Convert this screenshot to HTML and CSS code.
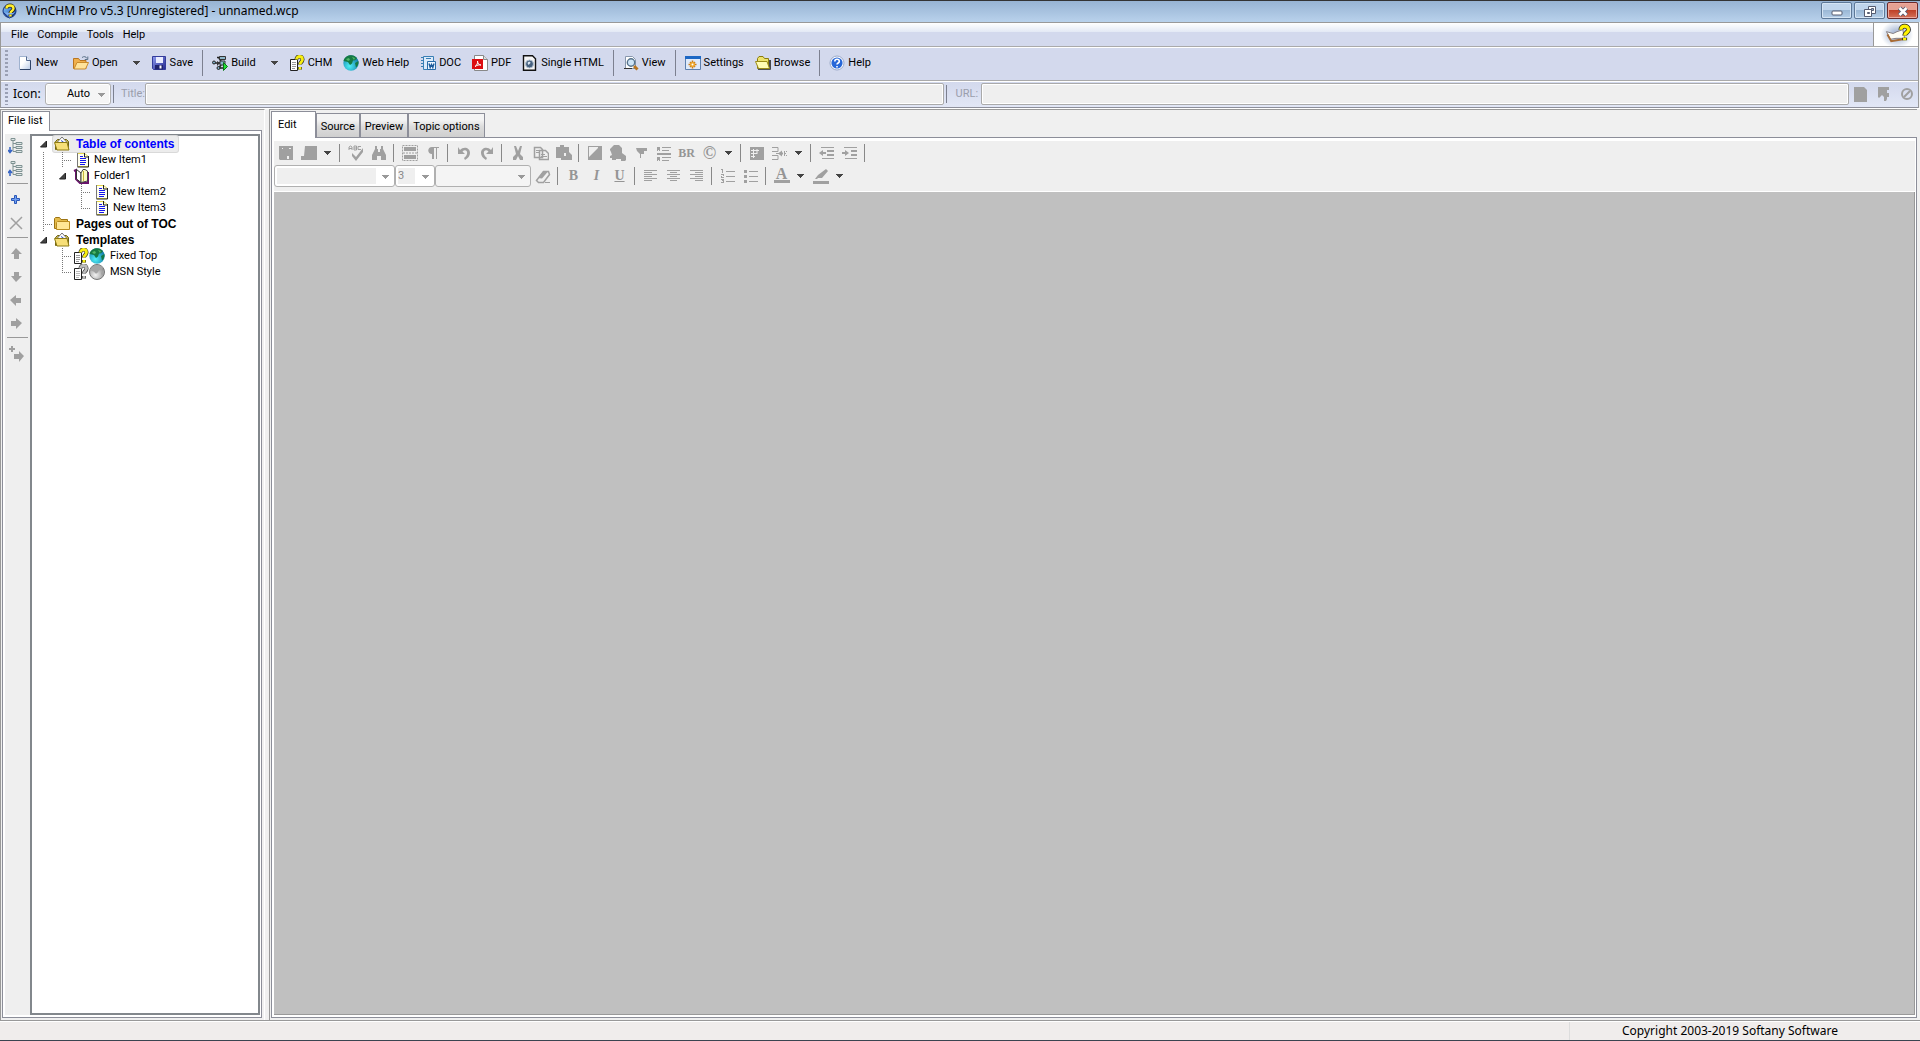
FILE: index.html
```html
<!DOCTYPE html>
<html lang="en">
<head>
<meta charset="utf-8">
<title>WinCHM Pro v5.3 [Unregistered] - unnamed.wcp</title>
<link rel="stylesheet" href="styles.css">
</head>
<body>
<svg class="sprite" aria-hidden="true">
  <defs>
    <linearGradient id="gBlue" x1="0" y1="0" x2="1" y2="1"><stop offset="0" stop-color="#8fd0ff"/><stop offset="1" stop-color="#0b3fa8"/></linearGradient>
    <linearGradient id="gSave" x1="0" y1="0" x2="1" y2="1"><stop offset="0" stop-color="#8e9cf0"/><stop offset="1" stop-color="#23278f"/></linearGradient>
    <linearGradient id="gPage" x1="0" y1="0" x2="1" y2="1"><stop offset=".4" stop-color="#fff"/><stop offset="1" stop-color="#b9cbe8"/></linearGradient>
    <radialGradient id="gGlobe" cx=".4" cy=".7" r=".7"><stop offset="0" stop-color="#4df0f5"/><stop offset="1" stop-color="#1277a8"/></radialGradient>
    <radialGradient id="gGray" cx=".4" cy=".7" r=".7"><stop offset="0" stop-color="#f2f2f2"/><stop offset="1" stop-color="#888"/></radialGradient>
    <radialGradient id="gHalo"><stop offset="0" stop-color="#8ea4c8"/><stop offset="1" stop-color="#fff"/></radialGradient>
  </defs>
  <symbol id="app" viewBox="0 0 16 16"><circle cx="7.500" cy="8" r="6.500" fill="url(#gBlue)" stroke="#12307c"/><path d="M1.500 9.500l6 5.500 6-5.500" fill="#7fb0f0" stroke="#12307c"/><path d="M4.500 5.500c0-4 7-4 7 0 0 2.500-3 2.500-3 4.500M8.500 11.500v2" fill="none" stroke="#222" stroke-width="4"/><path d="M4.500 5.500c0-4 7-4 7 0 0 2.500-3 2.500-3 4.500M8.500 11.500v2" fill="none" stroke="#ffee2e" stroke-width="2.400"/></symbol>
  <symbol id="new" viewBox="0 0 16 16"><path d="M2.500 1.500h7l4 4v9h-11z" fill="url(#gPage)" stroke="#9fb2cf"/><path d="M13.500 5v9.500H3" fill="none" stroke="#2f4468"/><path d="M9.500 1.500v4h4" fill="#dfe9f8" stroke="#54698f"/></symbol>
  <symbol id="open" viewBox="0 0 16 16"><path d="M.5 13.500v-10h5l1.500 2h6v8z" fill="#f0b04c" stroke="#b97520"/><path d="M1 14l3-6.500h11.500L12.500 14z" fill="#ffe39a" stroke="#c98b2c"/><path d="M9 2.500c2-1.500 4-1 5 1M14.800 1.500v3h-3" fill="none" stroke="#5b7189"/></symbol>
  <symbol id="save" viewBox="0 0 16 16"><path d="M1.500 1.500h13v13h-12l-1-1z" fill="url(#gSave)" stroke="#343c9b"/><path d="M5 2h7v6H5z" fill="#e9ecff"/><path d="M4 10h8v4.500H4z" fill="#20246e"/><path d="M8.500 10.500h2v3h-2z" fill="#fff"/></symbol>
  <symbol id="build" viewBox="0 0 16 16"><path d="M5 2.500h7M7 3l3 5M1 8h10M7 13l3-5M6 13h5" stroke="#222" stroke-width="1.500" fill="none"/><circle cx="2" cy="7.500" r="1.500" fill="#79a9c4" stroke="#222"/><path d="M7.500 1.500h6v3h-6zM8 6h5v4H8z" fill="#8bb5c8" stroke="#333"/><path d="M5 6l3 2-3 3z" fill="#333"/><circle cx="6.500" cy="13" r="1.500" fill="#79a9c4" stroke="#222"/><path d="M11.500 7.500l4 4-4 4z" fill="#23dd35" stroke="#087414"/></symbol>
  <symbol id="chm" viewBox="0 0 16 16"><path d="M1.500 4.500h7v11h-7z" fill="#fff" stroke="#222"/><path d="M3 7.500h4M3 9.500h4M3 11.500h4M3 13.500h3" stroke="#999"/><path d="M7.500 4.500c0-4 6-4 6 0 0 2.500-2.500 2.500-2.500 5M11 12v2.500" fill="none" stroke="#222" stroke-width="4"/><path d="M7.500 4.500c0-4 6-4 6 0 0 2.500-2.500 2.500-2.500 5M11 12v2.500" fill="none" stroke="#f7ee12" stroke-width="2.800"/></symbol>
  <symbol id="chmGray" viewBox="0 0 16 16"><path d="M1.500 4.500h7v11h-7z" fill="#fff" stroke="#222"/><path d="M3 7.500h4M3 9.500h4M3 11.500h4M3 13.500h3" stroke="#bbb"/><path d="M7.500 4.500c0-4 6-4 6 0 0 2.500-2.500 2.500-2.500 5M11 12v2.500" fill="none" stroke="#333" stroke-width="4"/><path d="M7.500 4.500c0-4 6-4 6 0 0 2.500-2.500 2.500-2.500 5M11 12v2.500" fill="none" stroke="#bbb" stroke-width="2.800"/></symbol>
  <symbol id="globe" viewBox="0 0 16 16"><circle cx="8" cy="8" r="7.700" fill="url(#gGlobe)"/><path d="M.5 6C1.500 2 5 .3 8 .3c3 0 5 1.500 6 3l-2 2-2 .2-1 3-2 1.500-2-3zM12 8l3.500-2c.3 3-.8 5-2.500 6.500z" fill="#157a43"/><path d="M3 4l3-1 1 2-2 1zM9 2l3 1-1 2z" fill="#50b868"/></symbol>
  <symbol id="globeGray" viewBox="0 0 16 16"><circle cx="8" cy="8" r="7.500" fill="url(#gGray)" stroke="#777"/><path d="M1 6C2 3 5 1 8 1c3 0 5 1 6 3l-2 2-2 .2-1 2-2 1.500-2-2zM12 9l3-3c.3 3-.8 5-2 6z" fill="#a4a4a4"/></symbol>
  <symbol id="doc" viewBox="0 0 16 16"><path d="M3.500 1.500h10v13h-10z" fill="#dcebfb" stroke="#397fb4"/><path d="M1 2.500h3M1 5.500h3M1 8.500h3M1 11.500h3M6 3.500h5" stroke="#397fb4"/><path d="M7.500 6.500h8v8h-8z" fill="#eef6ff" stroke="#286ca8"/><path d="M9 8.500l1.200 4 1.300-3 1.300 3 1.200-4" fill="none" stroke="#1d5c9c" stroke-width="1.400"/></symbol>
  <symbol id="pdf" viewBox="0 0 16 16"><path d="M2.500.5h9l4 4v11h-13z" fill="#fff" stroke="#888"/><path d="M11.500.5v4h4" fill="#ddd" stroke="#888"/><path d="M0 4h11v10H0z" fill="#dc0d12"/><path d="M3 11.500c2-1 3-4 2.500-5.500 0 3 2 4 3.500 4-2-.5-4 .2-6 1.500z" fill="none" stroke="#fff"/></symbol>
  <symbol id="html" viewBox="0 0 16 16"><path d="M1.500.8h9l3 3v11.400h-12z" fill="#f5f5f5" stroke="#111" stroke-width="1.400"/><circle cx="7.500" cy="9" r="4" fill="#46617f" stroke="#b7c4d2"/><path d="M5.500 8c1-2 3-1.500 3 0l-2 2z" fill="#dce8f4"/></symbol>
  <symbol id="view" viewBox="0 0 16 16"><path d="M2.500 1.500h7l3 3v9h-10z" fill="#fff" stroke="#8897ad"/><path d="M1 13.500h8" stroke="#333"/><circle cx="8" cy="7.500" r="3.700" fill="#cde4f7" stroke="#56728c" stroke-width="1.400"/><path d="M11 11l3.500 3.500" stroke="#b77420" stroke-width="3"/></symbol>
  <symbol id="settings" viewBox="0 0 16 16"><path d="M.5 1.500h15v13H.5z" fill="#dfeafa" stroke="#5d7fae"/><path d="M0 1h16v3H0z" fill="#1c67c4"/><path d="M7.500 5.500v8M3.500 9.500h8M5 7l5 5M10 7l-5 5" stroke="#cf7d12" stroke-width="1.600"/><circle cx="7.500" cy="9.500" r="2.500" fill="#eda82e"/><circle cx="7.500" cy="9.500" r="1" fill="#fff"/></symbol>
  <symbol id="browse" viewBox="0 0 16 16"><path d="M2.500 13.500V3.500l1.500-2h4l1.500 2h4v10z" fill="#eee36b" stroke="#8a7c0e"/><path d="M15 5v9H3" fill="none" stroke="#222" stroke-width="1.600"/><path d="M.5 6.500h11.500l2.500 7H3.500z" fill="#fffbb4" stroke="#9a8b16"/></symbol>
  <symbol id="help" viewBox="0 0 16 16"><circle cx="8" cy="8" r="7" fill="#fff" stroke="#9aa8c8"/><circle cx="8" cy="8" r="5.600" fill="#2767d8"/><path d="M5.800 6.500c0-3 4.500-3 4.500 0C10.300 8 8 8 8 9.500M8 11v1.500" fill="none" stroke="#fff" stroke-width="1.600"/></symbol>
  <symbol id="logo" viewBox="0 0 42 24"><path d="M0 0h42v24H0z" fill="#fff"/><ellipse cx="21" cy="12" rx="17" ry="14" fill="url(#gHalo)"/><path d="M10 9l4 8 6-1 9 0-2-9-6 2-4 2z" fill="#fffdf5" stroke="#847b80"/><path d="M11 12l4 7 12-2" fill="none" stroke="#a86b35" stroke-width="2"/><path d="M25 7c0-5 8-5 8 0 0 3-4 3-4 6M29 15.500v2.500" fill="none" stroke="#222" stroke-width="5"/><path d="M25 7c0-5 8-5 8 0 0 3-4 3-4 6M29 15.500v2.500" fill="none" stroke="#fff200" stroke-width="3.400"/></symbol>
  <symbol id="down" viewBox="0 0 8 8"><path d="M0 2h7v1H0zM1 3h5v1H1zM2 4h3v1H2zM3 5h1v1H3z" fill="currentColor"/></symbol>

  <symbol id="folderOpen" viewBox="0 0 16 16"><path d="M1.500 5.500l2-2h9l2 2v8h-13z" fill="#c9b64c" stroke="#6f6312"/><path d="M3 6.500l5-5.500 5 5.500v2H3z" fill="#fff" stroke="#777"/><path d="M7 4.500l2.500 1.500" stroke="#3355cc"/><path d="M.5 6.500h12.500l2 7.500H3z" fill="#f7df78" stroke="#8f7c14"/></symbol>
  <symbol id="folder" viewBox="0 0 16 16"><path d="M.5 12.500v-10l1-1h4l1.500 2h6.500v9z" fill="#e5bb4a" stroke="#9c7414"/><path d="M2.500 13.500v-7l1-1H15.500v8z" fill="#ffe696" stroke="#b98b20"/></symbol>
  <symbol id="page" viewBox="0 0 16 16"><path d="M4.500 1.500h7l4 3v10h-11z" fill="#fffff0" stroke="#e4d64a"/><path d="M15.500 4v11H4.500M11.500 1v4h4" fill="none" stroke="#222"/><path d="M4.500 1v14" stroke="#777"/><path d="M7 4.500h3M7 6.500h6M7 8.500h6M7 10.500h6M7 12.500h5" stroke="#1515ee"/></symbol>
  <symbol id="book" viewBox="0 0 16 16"><path d="M1 3l2-1v9l4 4h8V4" fill="none" stroke="#6a136c" stroke-width="2"/><path d="M3.500 1.500L8 5v9.500L3.500 11z" fill="#fff" stroke="#333"/><path d="M8 5l2-3.500h2L14.500 3v10L8 14.500z" fill="#fdfac4" stroke="#444"/><path d="M10.500 3v10" stroke="#c8b93a"/></symbol>
  <symbol id="expander" viewBox="0 0 8 8"><path d="M6.500 1v6h-6z" fill="#444" stroke="#222"/></symbol>

  <symbol id="treeDown" viewBox="0 0 16 16"><path d="M3 .5h4v2H3zM8 4.500h6v2H8zM8 8.500h6v2H8zM8 12.500h6v2H8z" fill="#dfe7e7" stroke="#7f9292"/><path d="M5 3v10.500h3M5 5.500h3M5 9.500h3" fill="none" stroke="#7f9292"/><path d="M2 9v5M0 12l2 2.500L4 12" fill="none" stroke="#3563c4" stroke-width="1.500"/></symbol>
  <symbol id="treeUp" viewBox="0 0 16 16"><path d="M3 .5h4v2H3zM8 4.500h6v2H8zM8 8.500h6v2H8zM8 12.500h6v2H8z" fill="#dfe7e7" stroke="#7f9292"/><path d="M5 3v10.500h3M5 5.500h3M5 9.500h3" fill="none" stroke="#7f9292"/><path d="M2 15v-5M0 12l2-2.500L4 12" fill="none" stroke="#3563c4" stroke-width="1.500"/></symbol>
  <symbol id="plus" viewBox="0 0 16 16"><path d="M6.500 3.500h2v3h3v2h-3v3h-2v-3h-3v-2h3z" fill="#6f9ef0" stroke="#2a57b8"/></symbol>
  <symbol id="cross" viewBox="0 0 16 16"><path d="M3 3l11 11M14 2L2 14" stroke="#a0a0a0" stroke-width="1.500"/></symbol>
  <symbol id="up" viewBox="0 0 16 16"><path d="M8 2l6 6h-3v5H6V8H3z"/></symbol>
  <symbol id="dn" viewBox="0 0 16 16"><path d="M8 13l6-6h-3V3H6v4H3z"/></symbol>
  <symbol id="lt" viewBox="0 0 16 16"><path d="M2 8l6-5v3h5v5H8v3z"/></symbol>
  <symbol id="rt" viewBox="0 0 16 16"><path d="M14 8L8 3v3H3v5h5v3z"/></symbol>
  <symbol id="addRt" viewBox="0 0 16 16"><path d="M3 0h2v2h2v2H5v2H3V4H1V2h2zM16 10l-5-5v3H6v5h5v3z"/></symbol>

  <symbol id="eSave" viewBox="0 0 16 16"><path fill-rule="evenodd" d="M1 1h14v14H2l-1-1zM4 3v1h1V3zM11 3v1h2V3zM9 11v3h2v-3z"/></symbol>
  <symbol id="eImg" viewBox="0 0 16 16"><path d="M4 1h12v14H0v-4h3z"/></symbol>
  <symbol id="eSpell" viewBox="0 0 16 16"><path d="M4 8l4 4 7-9v4l-7 9-4-5z"/><path d="M1 5V2l1.500-1L4 2v3M1 3.500h3M6 1v4h2.500V1zM6 3h2M13 1.500h-3v3h3" fill="none" stroke="#a0a0a0"/></symbol>
  <symbol id="eFind" viewBox="0 0 16 16"><path d="M4 1h2v3h1v3h2V4h1V1h2v3l3 6v5h-5v-4H6v4H1v-5l3-6z"/></symbol>
  <symbol id="eBreak" viewBox="0 0 16 16"><path d="M2 2h12v4H2zM2 10h12v4H2z"/><path d="M.5.500h15v15H.500zM1 8h14" fill="none" stroke="#a0a0a0" stroke-dasharray="2 1"/></symbol>
  <symbol id="ePara" viewBox="0 0 16 16"><path d="M7 9C2 9 2 2 7 2h7v1h-2v11h-1V3H9v11H7z"/></symbol>
  <symbol id="eUndo" viewBox="0 0 16 16"><path d="M2 2v7h7L6.500 6.500C9 4 12 6 11 9c-.5 2-2 3-3 4l1 2c3-2 5-4 5-7 0-5-6-7-10-3z"/></symbol>
  <symbol id="eRedo" viewBox="0 0 16 16"><path d="M14 2v7H7l2.500-2.500C7 4 4 6 5 9c.5 2 2 3 3 4l-1 2C4 13 2 11 2 8c0-5 6-7 10-3z"/></symbol>
  <symbol id="eCut" viewBox="0 0 16 16"><path d="M4 1h2l2 5 2-5h2l-2 8 3 3v3h-3l-2-4-2 4H3v-3l3-3z"/></symbol>
  <symbol id="eCopy" viewBox="0 0 16 16"><path d="M1.500 2.500h6l2 2v8h-8zM6.500 5.500h6l3 3v6h-9z" fill="#efefef" stroke="#a0a0a0" stroke-width="1.500"/><path d="M3 5.500h3M3 7.500h3M8 9.500h4M8 11.500h6" stroke="#a0a0a0"/></symbol>
  <symbol id="ePaste" viewBox="0 0 16 16"><path fill-rule="evenodd" d="M0 2h4V0h4v2h5v5l3 3v5H5v-2H0zM8 8v3h2V8z"/></symbol>
  <symbol id="ePict" viewBox="0 0 16 16"><path fill-rule="evenodd" d="M1 1h14v14H1zM2 2v10L11 3V2z"/></symbol>
  <symbol id="eShape" viewBox="0 0 16 16"><path d="M3 1l1-1h5l3 3v5l4 3v4l-1 1h-4v-2H6v1H2v-2H0v-2l2-1-1-3-1-2V4z"/></symbol>
  <symbol id="eFlag" viewBox="0 0 16 16"><path d="M3 3h11v3h-3v3H8v4H7V9L4 6z"/></symbol>
  <symbol id="eHr" viewBox="0 0 16 16"><path d="M1 8h14v2H1zM6 2h9v1H6zM6 5h7v1H6zM6 12h9v1H6zM6 15h7v1H6zM1 2h3v4H3V5H2v1H1zM1 12h3v4H3v-1H2v1H1z"/></symbol>
  <symbol id="eTable" viewBox="0 0 16 16"><path d="M1 2h14v13H1z"/><path d="M2 5.500h8M2 8.500h6M2 11.500h4M4.500 4v9M8 4v5" stroke="#efefef"/></symbol>
  <symbol id="eCell" viewBox="0 0 16 16"><path d="M0 2.500h6v4H0M0 14.500h6v-4H0M4 8.500h3" fill="none" stroke="#a0a0a0"/><path d="M6 8.500l4-3v2h1v2h-1v2zM12 6h1v2h1V6h1v1h-1v3h1v1h-1V9h-1v2h-1z"/></symbol>
  <symbol id="eOut" viewBox="0 0 16 16"><path d="M2 2h13v1H2zM8 5h7v2H8zM8 9h7v2H8zM3 13h12v1H3zM0 8l4-3v2h3v2H4v2z"/></symbol>
  <symbol id="eIn" viewBox="0 0 16 16"><path d="M2 2h13v1H2zM9 5h6v2H9zM9 9h6v2H9zM3 13h12v1H3zM7 8L3 5v2H0v2h3v2z"/></symbol>
  <symbol id="eErase" viewBox="0 0 16 16"><path d="M1.500 12.500l7-9h5l1 3-6 8h-5z" fill="none" stroke="#a0a0a0" stroke-width="1.500"/><path d="M3 10l4 .500 6-7h-5z"/><path d="M10 14.500h5" stroke="#a0a0a0"/></symbol>
  <symbol id="aLeft" viewBox="0 0 16 16"><path d="M1 2h13v1H1zM1 4h8v1H1zM1 6h13v1H1zM1 8h8v1H1zM1 10h13v1H1zM1 12h8v1H1z"/></symbol>
  <symbol id="aMid" viewBox="0 0 16 16"><path d="M1 2h13v1H1zM4 4h7v1H4zM1 6h13v1H1zM4 8h7v1H4zM1 10h13v1H1zM4 12h7v1H4z"/></symbol>
  <symbol id="aRight" viewBox="0 0 16 16"><path d="M1 2h13v1H1zM6 4h8v1H6zM1 6h13v1H1zM6 8h8v1H6zM1 10h13v1H1zM6 12h8v1H6z"/></symbol>
  <symbol id="lNum" viewBox="0 0 16 16"><path d="M6 3h9v1H6zM6 8h9v1H6zM6 13h9v1H6zM1 1h2v4H2V2H1zM1 6h3v2H2v1h2v1H1V8h2V7H1zM1 11h3v4H1v-1h2v-1H2v-1H1z"/></symbol>
  <symbol id="lBul" viewBox="0 0 16 16"><path d="M6 3h9v1H6zM6 8h9v1H6zM6 13h9v1H6zM1 2h3v3H1zM1 7h3v3H1zM1 12h3v3H1z"/></symbol>
  <symbol id="ePen" viewBox="0 0 16 16"><path d="M13 1l2 2-6 7H5l-1 1H2l3-4zM0 13h16v3H0z"/></symbol>
  <symbol id="tPage" viewBox="0 0 16 16"><path d="M1 1h10l3 3v12H1z"/></symbol>
  <symbol id="tArrow" viewBox="0 0 16 16"><path d="M2 1h11v3h-2v3h2v4h-2v2l-1 2H8v-4L6 9l-3 3-1-1z"/></symbol>
  <symbol id="tNo" viewBox="0 0 16 16"><circle cx="8" cy="8" r="5" fill="none" stroke="#a0a0a0" stroke-width="2"/><path d="M5 11l6-6" stroke="#a0a0a0" stroke-width="2"/></symbol>
</svg>

<div class="window">
  <header class="titlebar">
    <svg class="icon"><use href="#app"/></svg>
    <h1 class="caption">WinCHM Pro v5.3 [Unregistered] - unnamed.wcp</h1>
    <div class="controls">
      <button class="ctl" aria-label="Minimize"><svg class="icon" viewBox="0 0 16 16"><rect x="3" y="8" width="10" height="4" rx="1" fill="#fff" stroke="#555b70"/></svg></button>
      <button class="ctl" aria-label="Restore"><svg class="icon" viewBox="0 0 16 16"><path d="M6.500 3.500h7v7h-7z" fill="#fff" stroke="#555b70"/><path d="M9.500 5.500h2v2h-2z" fill="#8fb0d0" stroke="#555b70"/><path d="M2.500 6.500h7v7h-7z" fill="#fff" stroke="#555b70"/><path d="M5.500 9.500h2v1h-2z" fill="#8fb0d0" stroke="#555b70"/></svg></button>
      <button class="ctl close" aria-label="Close"><svg class="icon" viewBox="0 0 16 16"><path d="M4.500 5l7 7M11.500 5l-7 7" stroke="#555b70" stroke-width="4.500"/><path d="M4.500 5l7 7M11.500 5l-7 7" stroke="#fff" stroke-width="2.600"/></svg></button>
    </div>
  </header>

  <div class="bars">
    <nav class="menubar">
      <button class="menu">File</button><button class="menu">Compile</button><button class="menu">Tools</button><button class="menu">Help</button>
      <div class="brand"><svg class="logo"><use href="#logo"/></svg></div>
    </nav>

    <div class="toolbar">
      <span class="grip"></span>
      <button class="tool wide"><svg class="icon"><use href="#new"/></svg>New</button>
      <button class="tool split"><svg class="icon"><use href="#open"/></svg>Open<svg class="arrow"><use href="#down"/></svg></button>
      <button class="tool"><svg class="icon"><use href="#save"/></svg>Save</button>
      <span class="sep"></span>
      <button class="tool split"><svg class="icon"><use href="#build"/></svg>Build<svg class="arrow"><use href="#down"/></svg></button>
      <button class="tool"><svg class="icon"><use href="#chm"/></svg>CHM</button>
      <button class="tool"><svg class="icon"><use href="#globe"/></svg>Web Help</button>
      <button class="tool"><svg class="icon"><use href="#doc"/></svg>DOC</button>
      <button class="tool"><svg class="icon"><use href="#pdf"/></svg>PDF</button>
      <button class="tool"><svg class="icon"><use href="#html"/></svg>Single HTML</button>
      <span class="sep"></span>
      <button class="tool"><svg class="icon"><use href="#view"/></svg>View</button>
      <span class="sep"></span>
      <button class="tool"><svg class="icon"><use href="#settings"/></svg>Settings</button>
      <button class="tool"><svg class="icon"><use href="#browse"/></svg>Browse</button>
      <span class="sep"></span>
      <button class="tool"><svg class="icon"><use href="#help"/></svg>Help</button>
    </div>

    <div class="propbar">
      <span class="grip"></span>
      <label class="icon-label" for="icon">Icon:</label>
      <div class="select auto"><select id="icon"><option>Auto</option></select><svg class="arrow"><use href="#down"/></svg></div>
      <span class="bar"></span>
      <label class="dim" for="title">Title:</label>
      <input class="field title" id="title" disabled>
      <span class="bar"></span>
      <label class="dim" for="url">URL:</label>
      <input class="field url" id="url" disabled>
      <div class="tail">
        <button class="btn" aria-label="Page" disabled><svg class="icon"><use href="#tPage"/></svg></button>
        <button class="btn" aria-label="Jump" disabled><svg class="icon"><use href="#tArrow"/></svg></button>
        <button class="btn" aria-label="None" disabled><svg class="icon"><use href="#tNo"/></svg></button>
      </div>
    </div>
  </div>

  <main class="work">
    <section class="files">
      <div class="tabs"><button class="tab active list">File list</button></div>
      <div class="files-body">
        <div class="side">
          <button class="btn" aria-label="Expand all"><svg class="icon"><use href="#treeDown"/></svg></button>
          <button class="btn" aria-label="Collapse all"><svg class="icon"><use href="#treeUp"/></svg></button>
          <span class="hsep"></span>
          <button class="btn" aria-label="Add"><svg class="icon"><use href="#plus"/></svg></button>
          <button class="btn" aria-label="Delete"><svg class="icon"><use href="#cross"/></svg></button>
          <span class="hsep"></span>
          <button class="btn" aria-label="Move up"><svg class="icon"><use href="#up"/></svg></button>
          <button class="btn" aria-label="Move down"><svg class="icon"><use href="#dn"/></svg></button>
          <button class="btn" aria-label="Move left"><svg class="icon"><use href="#lt"/></svg></button>
          <button class="btn" aria-label="Move right"><svg class="icon"><use href="#rt"/></svg></button>
          <span class="hsep"></span>
          <button class="btn" aria-label="Add to contents"><svg class="icon"><use href="#addRt"/></svg></button>
        </div>
        <ul class="tree">
          <li class="row"><i class="cell"><svg class="exp"><use href="#expander"/></svg></i><span class="node root selected"><svg class="icon"><use href="#folderOpen"/></svg>Table of contents</span></li>
          <li class="row"><i class="cell v"></i><i class="cell v h"></i><span class="node"><svg class="icon"><use href="#page"/></svg>New Item1</span></li>
          <li class="row"><i class="cell v"></i><i class="cell"><svg class="exp"><use href="#expander"/></svg></i><span class="node"><svg class="icon"><use href="#book"/></svg>Folder1</span></li>
          <li class="row"><i class="cell v"></i><i class="cell"></i><i class="cell v h"></i><span class="node"><svg class="icon"><use href="#page"/></svg>New Item2</span></li>
          <li class="row"><i class="cell v"></i><i class="cell"></i><i class="cell half h"></i><span class="node"><svg class="icon"><use href="#page"/></svg>New Item3</span></li>
          <li class="row"><i class="cell v h"></i><span class="node root"><svg class="icon"><use href="#folder"/></svg>Pages out of TOC</span></li>
          <li class="row"><i class="cell"><svg class="exp"><use href="#expander"/></svg></i><span class="node root"><svg class="icon"><use href="#folderOpen"/></svg>Templates</span></li>
          <li class="row"><i class="cell"></i><i class="cell v h"></i><span class="node"><span class="pair"><svg class="icon"><use href="#chm"/></svg><svg class="icon"><use href="#globe"/></svg></span>Fixed Top</span></li>
          <li class="row"><i class="cell"></i><i class="cell half h"></i><span class="node"><span class="pair"><svg class="icon"><use href="#chmGray"/></svg><svg class="icon"><use href="#globeGray"/></svg></span>MSN Style</span></li>
        </ul>
      </div>
    </section>

    <section class="editor">
      <div class="tabs"><button class="tab active">Edit</button><button class="tab">Source</button><button class="tab">Preview</button><button class="tab">Topic options</button></div>
      <div class="editor-body">
        <div class="format">
          <div class="line">
            <button class="btn" aria-label="Save" disabled><svg class="icon"><use href="#eSave"/></svg></button>
            <button class="btn" aria-label="Template" disabled><svg class="icon"><use href="#eImg"/></svg></button>
            <button class="drop" aria-label="More"><svg class="arrow"><use href="#down"/></svg></button>
            <span class="vsep"></span>
            <button class="btn" aria-label="Spelling" disabled><svg class="icon"><use href="#eSpell"/></svg></button>
            <button class="btn" aria-label="Find" disabled><svg class="icon"><use href="#eFind"/></svg></button>
            <span class="vsep"></span>
            <button class="btn" aria-label="Page break" disabled><svg class="icon"><use href="#eBreak"/></svg></button>
            <button class="btn" aria-label="Paragraph" disabled><svg class="icon"><use href="#ePara"/></svg></button>
            <span class="vsep"></span>
            <button class="btn" aria-label="Undo" disabled><svg class="icon"><use href="#eUndo"/></svg></button>
            <button class="btn" aria-label="Redo" disabled><svg class="icon"><use href="#eRedo"/></svg></button>
            <span class="vsep"></span>
            <button class="btn" aria-label="Cut" disabled><svg class="icon"><use href="#eCut"/></svg></button>
            <button class="btn" aria-label="Copy" disabled><svg class="icon"><use href="#eCopy"/></svg></button>
            <button class="btn" aria-label="Paste" disabled><svg class="icon"><use href="#ePaste"/></svg></button>
            <span class="vsep"></span>
            <button class="btn" aria-label="Picture" disabled><svg class="icon"><use href="#ePict"/></svg></button>
            <button class="btn" aria-label="Shape" disabled><svg class="icon"><use href="#eShape"/></svg></button>
            <button class="btn" aria-label="Bookmark" disabled><svg class="icon"><use href="#eFlag"/></svg></button>
            <button class="btn" aria-label="Rule" disabled><svg class="icon"><use href="#eHr"/></svg></button>
            <button class="btn glyph small" disabled>BR</button>
            <button class="btn glyph sign" disabled>©</button>
            <button class="drop" aria-label="More symbols"><svg class="arrow"><use href="#down"/></svg></button>
            <span class="vsep"></span>
            <button class="btn" aria-label="Table" disabled><svg class="icon"><use href="#eTable"/></svg></button>
            <button class="btn" aria-label="Cells" disabled><svg class="icon"><use href="#eCell"/></svg></button>
            <button class="drop" aria-label="More cells"><svg class="arrow"><use href="#down"/></svg></button>
            <span class="vsep"></span>
            <button class="btn" aria-label="Outdent" disabled><svg class="icon"><use href="#eOut"/></svg></button>
            <button class="btn" aria-label="Indent" disabled><svg class="icon"><use href="#eIn"/></svg></button>
            <span class="vsep"></span>
          </div>
          <div class="line">
            <div class="select font"><select aria-label="Font" disabled><option></option></select><svg class="arrow"><use href="#down"/></svg></div>
            <div class="select size"><select aria-label="Size" disabled><option>3</option></select><svg class="arrow"><use href="#down"/></svg></div>
            <div class="select style"><select aria-label="Style" disabled><option></option></select><svg class="arrow"><use href="#down"/></svg></div>
            <button class="btn" aria-label="Clear" disabled><svg class="icon"><use href="#eErase"/></svg></button>
            <span class="vsep"></span>
            <button class="btn glyph" disabled>B</button>
            <button class="btn glyph italic" disabled>I</button>
            <button class="btn glyph under" disabled>U</button>
            <span class="vsep"></span>
            <button class="btn" aria-label="Left" disabled><svg class="icon"><use href="#aLeft"/></svg></button>
            <button class="btn" aria-label="Center" disabled><svg class="icon"><use href="#aMid"/></svg></button>
            <button class="btn" aria-label="Right" disabled><svg class="icon"><use href="#aRight"/></svg></button>
            <span class="vsep"></span>
            <button class="btn" aria-label="Numbers" disabled><svg class="icon"><use href="#lNum"/></svg></button>
            <button class="btn" aria-label="Bullets" disabled><svg class="icon"><use href="#lBul"/></svg></button>
            <span class="vsep"></span>
            <button class="btn glyph" disabled><span class="ink">A</span></button>
            <button class="drop" aria-label="Text colour"><svg class="arrow"><use href="#down"/></svg></button>
            <button class="btn" aria-label="Highlight" disabled><svg class="icon"><use href="#ePen"/></svg></button>
            <button class="drop" aria-label="Highlight colour"><svg class="arrow"><use href="#down"/></svg></button>
          </div>
        </div>
        <div class="canvas"></div>
      </div>
    </section>
  </main>

  <footer class="status"><span class="copy">Copyright 2003-2019 Softany Software</span></footer>
</div>
</body>
</html>
```
FILE: styles.css
```css
:root {
  --ui: Roboto, "Liberation Sans", sans-serif;
  --wide: "Noto Sans", sans-serif;
  --edge: #8c8e99;
  --face: #f0f0f0;
  --bar: #d3d9ed;
}
* { box-sizing: border-box; }
body { margin: 0; font: 11px/16px var(--ui); color: #000; background: var(--face); }
button, select, input { font: inherit; color: inherit; margin: 0; padding: 0; border: 0; background: none; border-radius: 0; }
button { display: flex; align-items: center; white-space: nowrap; }
.sprite { position: absolute; width: 0; height: 0; }
.icon { width: 16px; height: 16px; flex: none; display: block; fill: #a0a0a0; }
.arrow { width: 8px; height: 8px; flex: none; display: block; color: #444; }
.window { height: 100vh; display: flex; flex-direction: column; }

.titlebar { height: 22px; flex: none; display: flex; align-items: center; padding: 0 0 2px 2px; gap: 8px; border-top: 1px solid #333; background: linear-gradient(#97b3d3, #b9d2ec); }
.caption { margin: 0; font: 12px/18px var(--wide); flex: 1; }
.controls { display: flex; gap: 2px; align-self: flex-start; padding: 1px 2px 0 0; }
.ctl { width: 31px; height: 17px; justify-content: center; border: 1px solid #5d7898; border-radius: 2px; box-shadow: inset 0 0 0 1px #d4e4f4; background: linear-gradient(#c0d5ec 50%, #9bb8d6 50%, #b5cee8); }
.close { border-color: #6b2a2a; box-shadow: inset 0 0 0 1px #eda99d; background: linear-gradient(#e5a193 45%, #bf4128 50%, #d4735a); }

.bars { flex: none; border: 1px solid #999; border-bottom: 1px solid #8e909c; background: var(--bar); margin-right: 1px; }
.menubar { display: flex; height: 24px; padding-left: 6px; border-bottom: 1px solid #aaa; background: linear-gradient(#fff, #e3e9f5 9px, var(--bar) 9px); }
.menu { padding: 0 5px 0 4px; }
.brand { margin-left: auto; border-left: 1px solid #999; padding-left: 2px; background: #fff; }
.logo { width: 42px; height: 23px; display: block; }
.toolbar { display: flex; align-items: center; height: 34px; padding: 0 0 2px 4px; border-top: 1px solid #fff; border-bottom: 1px solid #aaa; }
.grip { width: 3px; align-self: stretch; margin: 2px 0 0; background: repeating-linear-gradient(#9aa0b4 0 2px, transparent 2px 4px); }
.tool { height: 24px; gap: 3px; padding: 0 5px 0 6px; }
.wide { padding: 0 9px; }
.split { padding-right: 4px; }
.split .arrow { margin-left: 12px; }
.sep { width: 1px; height: 26px; margin: 0 3px 0 4px; background: #7c8090; flex: none; }
.propbar { display: flex; align-items: center; height: 26px; padding: 0 0 2px 4px; border-top: 1px solid #fff; background: linear-gradient(var(--bar), #e2e7f6); }
.icon-label { font: 12px/16px var(--wide); width: 37px; padding-left: 5px; }
.select { position: relative; height: 22px; border: 1px solid #b0b0b0; border-radius: 3px; background: #f4f4f4; flex: none; }
.select select { appearance: none; width: 100%; height: 100%; opacity: 1; }
.select .arrow { position: absolute; right: 4px; top: 7px; color: #999; pointer-events: none; }
.auto { width: 66px; background: #f5f5f5; box-shadow: inset 0 0 0 1px #fff; }
.auto select { padding-left: 21px; }
.bar { width: 1px; height: 18px; margin: 0 0 0 2px; background: #7c8090; }
.dim { color: #9a9eac; width: 31px; text-align: right; flex: none; }
.field { height: 22px; min-width: 0; border: 1px solid #aaa; box-shadow: inset 0 0 0 1px #fff; background: #efefef; border-radius: 2px; }
.title { flex: 798; }
.url { flex: 867; margin-left: 3px; }
.tail { display: flex; }
.btn { width: 23px; height: 23px; flex: none; justify-content: center; }

.work { flex: 1; min-height: 0; display: flex; gap: 4px; border-top: 1px solid #fff; padding-right: 3px; }
.files, .editor { display: flex; flex-direction: column; border-left: 1px solid #999; border-top: 1px solid #999; }
.files { width: 265px; flex: none; padding: 1px 2px 0 1px; border-right: 1px solid #fff; }
.editor { flex: 1; min-width: 0; padding-top: 1px; padding-left: 1px; }
.tabs { display: flex; align-items: flex-end; flex: none; }
.tab { height: 24px; padding: 3px 4px 0; border: 1px solid var(--edge); border-bottom: 0; background: linear-gradient(#f4f4f4 25%, #dcdcdc 55%, #cfcfcf); }
.active { position: relative; margin-bottom: -1px; height: 27px; padding: 0 18px 0 6px; background: #fff; }
.list { height: 20px; padding: 0 6px 2px 5px; }
.files-body { flex: 1; min-height: 0; display: flex; padding: 3px 1px 2px 2px; background: #fff; border: 1px solid var(--edge); margin-bottom: 2px; }
.side { width: 25px; background: #efefef; display: flex; flex-direction: column; align-items: flex-start; flex: none; }
.side .btn { width: 22px; }
.hsep { width: 21px; height: 1px; margin: 3px 2px 4px; background: #999; flex: none; }
.tree { flex: 1; min-width: 0; margin: 0; padding: 0 2px; list-style: none; border: 2px solid #82878c; background: #fff; }
.row { display: flex; height: 16px; }
.cell { width: 19px; flex: none; display: flex; align-items: center; padding-left: 6px; background-repeat: no-repeat; --dv: repeating-linear-gradient(#777 0 1px, transparent 1px 2px); --dh: repeating-linear-gradient(90deg, #777 0 1px, transparent 1px 2px); }
.v { background-image: var(--dv); background-size: 1px 16px; background-position: 9px 0; }
.h { background-image: var(--dv), var(--dh); background-size: 1px 16px, 10px 1px; background-position: 9px 0, 9px 8px; }
.half { background-size: 1px 8px, 10px 1px; }
.exp { width: 8px; height: 8px; }
.node { display: flex; align-items: center; gap: 5px; padding: 0 4px 0 1px; white-space: nowrap; }
.root { font: bold 12px/16px "Liberation Sans", sans-serif; gap: 6px; }
.selected { color: #00f; background: #ececec; box-shadow: 0 0 0 1px #d9d9d9; border-radius: 2px; }
.pair { display: flex; }

.editor-body { flex: 1; min-height: 0; display: flex; flex-direction: column; padding: 3px 1px 2px 2px; border: 1px solid var(--edge); background: #fff; margin-bottom: 2px; }
.format { flex: none; background: #efefef; padding-bottom: 4px; border-bottom: 1px solid #fff; }
.line { display: flex; align-items: center; height: 23px; }
.drop { width: 16px; height: 23px; justify-content: center; flex: none; }
.vsep { width: 1px; height: 18px; margin: 0 4px 0 3px; background: #888; flex: none; }
.font { width: 121px; background: #fff; }
.font select { width: 99px; height: 16px; margin: 2px; background: #efefef; }
.size { width: 40px; background: #fff; color: #888; }
.size select { width: 17px; height: 16px; margin: 2px; background: #efefef; }
.style { width: 96px; }
.glyph { font: bold 14px/16px "Liberation Serif", serif; color: #959595; }
.small { font-size: 12px; }
.sign { font-size: 18px; }
.italic { font-style: italic; }
.under { text-decoration: underline; }
.ink { width: 16px; height: 15px; line-height: 12px; font-size: 16px; border-bottom: 3px solid #a0a0a0; }
.canvas { flex: 1; background: #c0c0c0; border: solid #999; border-width: 0 1px 1px 0; }

.status { flex: none; height: 21px; display: flex; justify-content: flex-end; border-top: 1px solid #999; border-bottom: 1px solid #3a4450; background: #f0edec; box-shadow: inset 0 1px #fff; }
.copy { width: 351px; border-left: 1px solid #ddd; padding-left: 52px; margin-top: 1px; font: 12px/17px var(--wide); }
```
